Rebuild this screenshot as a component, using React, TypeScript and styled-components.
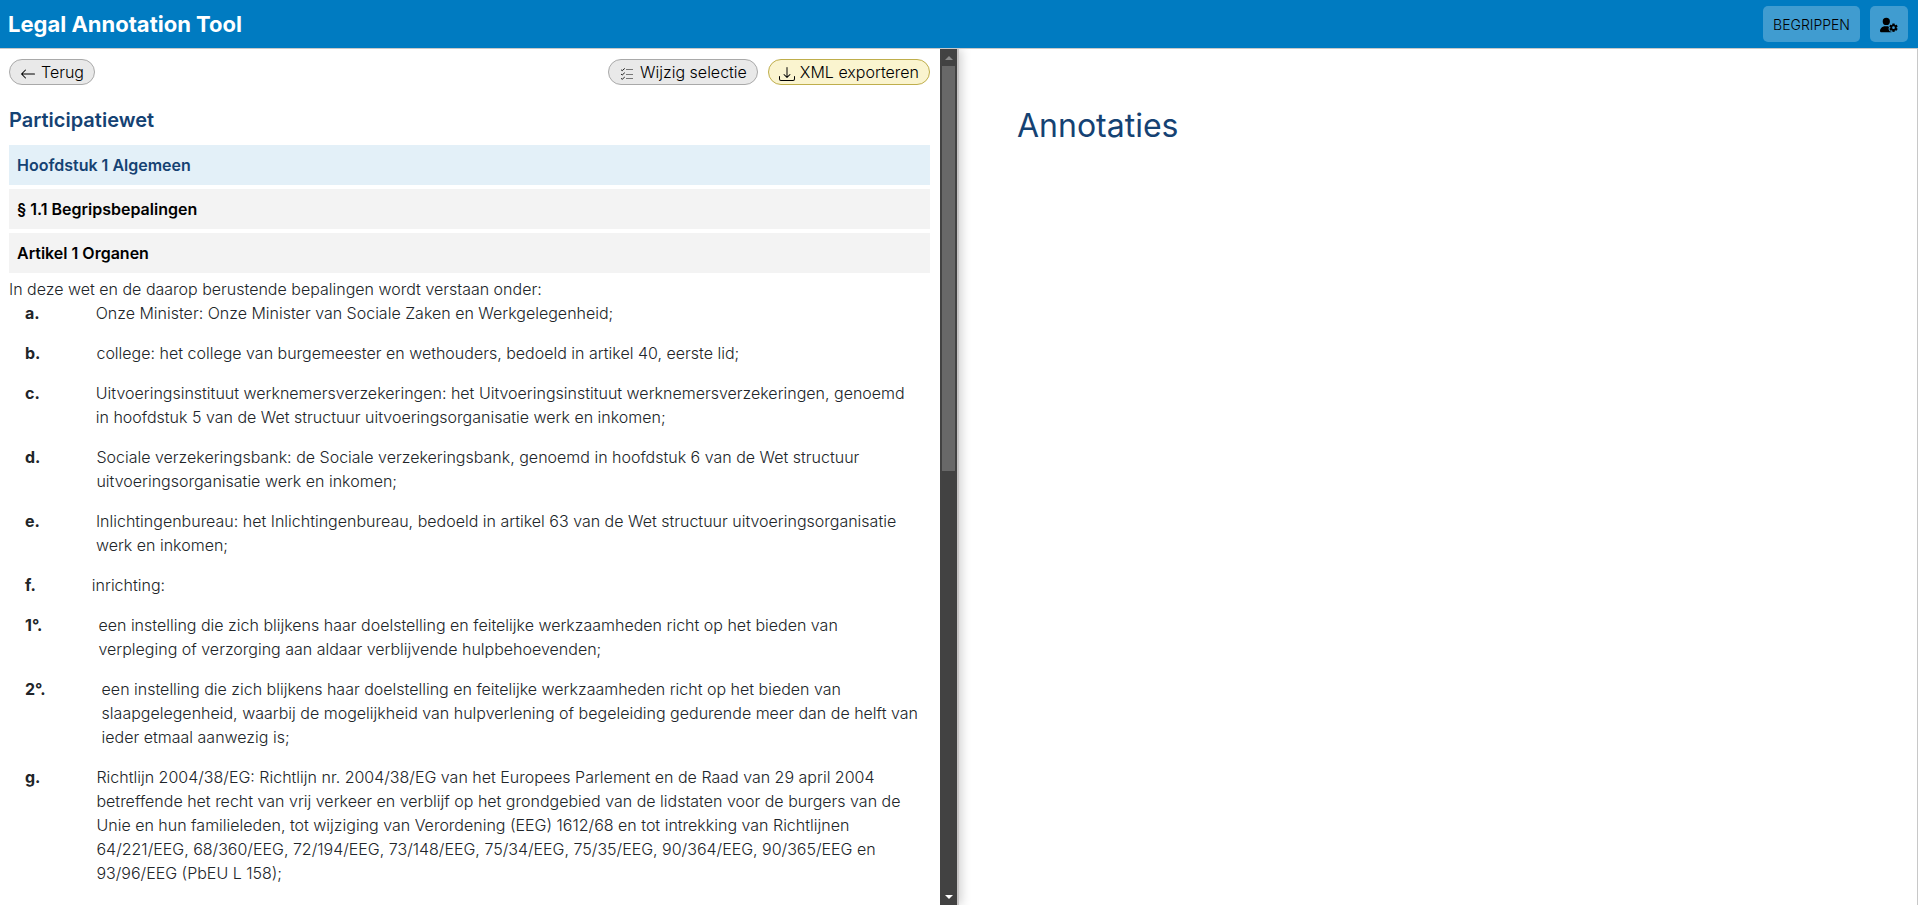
import React from "react";
import styled, { createGlobalStyle } from "styled-components";
import { BsArrowLeft, BsDownload } from "react-icons/bs";
import { FaUserGear } from "react-icons/fa6";

const GlobalStyle = createGlobalStyle`
  *, *::before, *::after { box-sizing: border-box; }
  body {
    margin: 0;
    background: #fff;
    color: #212529;
    font: 300 16px/24px Inter, "Liberation Sans", sans-serif;
  }
  button { font: inherit; cursor: pointer; }
`;

const Page = styled.div`
  display: flex;
  flex-direction: column;
  height: 100vh;
`;

const Header = styled.header`
  display: flex;
  align-items: center;
  justify-content: space-between;
  height: 49px;
  flex: none;
  padding: 0 10px 0 8px;
  background: #007bc1;
  border-bottom: 1px solid #c8c8c8;
`;

const Brand = styled.h1`
  margin: 0;
  color: #fff;
  font-size: 22px;
  font-weight: 700;
`;

const HeaderActions = styled.div`
  display: flex;
  align-items: center;
  gap: 10px;
`;

const HeaderButton = styled.button`
  display: flex;
  align-items: center;
  height: 36px;
  padding: 2px 10px 0;
  border: 0;
  border-radius: 5px;
  background: #409cd0;
  color: #000;
  font-size: 14px;
`;

const Panels = styled.main`
  display: grid;
  grid-template-columns: minmax(0, 1fr) minmax(0, 1fr);
  grid-template-rows: minmax(0, 1fr);
  flex: 1;
  min-height: 0;
  overflow: hidden;
`;

const LawPanel = styled.section`
  display: flex;
  border-right: 2px solid #c6c4c4;
  box-shadow: 2px 0 10px rgba(0, 0, 0, 0.2);
`;

const LawContent = styled.div`
  flex: 1;
  min-width: 0;
  overflow: hidden;
  padding: 10px 10px 0 9px;
`;

const Toolbar = styled.div`
  display: flex;
  gap: 10px;
`;

const Spacer = styled.span`
  flex: 1;
`;

const PillButton = styled.button<{ $tone?: "yellow" }>`
  display: flex;
  align-items: center;
  gap: 5px;
  height: 26px;
  padding: 0 10px;
  border: 1px solid ${(p) => (p.$tone ? "#bfae4c" : "#a9a9a9")};
  border-radius: 13px;
  background: ${(p) => (p.$tone ? "#faf4cf" : "#e9e9e9")};
  color: #000;

  svg { flex: none; margin-top: 3px; }
`;

const LawTitle = styled.h2`
  margin: 23px 0 13px;
  color: #154273;
  font-size: 20px;
  line-height: 24px;
  font-weight: 600;
`;

const SectionBar = styled.h3<{ $chapter?: boolean }>`
  margin: 0 0 4px;
  padding: 8px;
  background: ${(p) => (p.$chapter ? "#e3f0f8" : "#f3f3f3")};
  color: ${(p) => (p.$chapter ? "#154273" : "#000")};
  font-size: 16px;
  line-height: 24px;
  font-weight: 600;
`;

const Paragraph = styled.p`
  margin: 0;
`;

const Clauses = styled.ul`
  display: flex;
  flex-direction: column;
  gap: 16px;
  margin: 0;
  padding: 0 10px 0 16px;
  list-style: none;
`;

const Clause = styled.li`
  display: flex;
  gap: 56px;
`;

const ClauseLabel = styled.strong`
  flex: none;
  font-weight: 700;
`;

const Scrollbar = styled.div`
  display: flex;
  flex-direction: column;
  align-items: center;
  flex: none;
  width: 17px;
  background: #424242;
`;

const Arrow = styled.span<{ $down?: boolean }>`
  display: flex;
  align-items: center;
  justify-content: center;
  height: 17px;

  &::before {
    content: "";
    border: 4px solid transparent;
    border-top-width: ${(p) => (p.$down ? 4 : 0)}px;
    border-bottom-width: ${(p) => (p.$down ? 0 : 4)}px;
    border-top-color: ${(p) => (p.$down ? "#fff" : "transparent")};
    border-bottom-color: ${(p) => (p.$down ? "transparent" : "#8a8a8a")};
  }
`;

const Track = styled.div`
  flex: 1;
  width: 13px;
`;

const Thumb = styled.div`
  height: 49.3%;
  background: #686868;
`;

const NotesPanel = styled.section`
  padding: 57px 58px;
  border-right: 1px solid #c8c8c8;
`;

const NotesTitle = styled.h2`
  margin: 0;
  color: #154273;
  font-size: 32px;
  line-height: 40px;
  font-weight: 400;
`;

function ChecklistIcon() {
  return (
    <svg width="16" height="16" viewBox="0 0 16 16" fill="none" aria-hidden="true">
      <path d="M2 3.7l1.2 1L5.8 2.4M2 8l1.2 1 2.6-2.3M2 12.3l1.2 1L5.8 11" stroke="#222" strokeWidth="1" />
      <path d="M7 3.5h7M7 8.5h7M7 12.5h7" stroke="#777" strokeWidth="1" />
    </svg>
  );
}

const clauses = [
  ["a.", "Onze Minister: Onze Minister van Sociale Zaken en Werkgelegenheid;"],
  ["b.", "college: het college van burgemeester en wethouders, bedoeld in artikel 40, eerste lid;"],
  ["c.", "Uitvoeringsinstituut werknemersverzekeringen: het Uitvoeringsinstituut werknemersverzekeringen, genoemd in hoofdstuk 5 van de Wet structuur uitvoeringsorganisatie werk en inkomen;"],
  ["d.", "Sociale verzekeringsbank: de Sociale verzekeringsbank, genoemd in hoofdstuk 6 van de Wet structuur uitvoeringsorganisatie werk en inkomen;"],
  ["e.", "Inlichtingenbureau: het Inlichtingenbureau, bedoeld in artikel 63 van de Wet structuur uitvoeringsorganisatie werk en inkomen;"],
  ["f.", "inrichting:"],
  ["1°.", "een instelling die zich blijkens haar doelstelling en feitelijke werkzaamheden richt op het bieden van verpleging of verzorging aan aldaar verblijvende hulpbehoevenden;"],
  ["2°.", "een instelling die zich blijkens haar doelstelling en feitelijke werkzaamheden richt op het bieden van slaapgelegenheid, waarbij de mogelijkheid van hulpverlening of begeleiding gedurende meer dan de helft van ieder etmaal aanwezig is;"],
  ["g.", "Richtlijn 2004/38/EG: Richtlijn nr. 2004/38/EG van het Europees Parlement en de Raad van 29 april 2004 betreffende het recht van vrij verkeer en verblijf op het grondgebied van de lidstaten voor de burgers van de Unie en hun familieleden, tot wijziging van Verordening (EEG) 1612/68 en tot intrekking van Richtlijnen 64/221/EEG, 68/360/EEG, 72/194/EEG, 73/148/EEG, 75/34/EEG, 75/35/EEG, 90/364/EEG, 90/365/EEG en 93/96/EEG (PbEU L 158);"],
];

export default function App() {
  return (
    <Page>
      <GlobalStyle />
      <Header>
        <Brand>Legal Annotation Tool</Brand>
        <HeaderActions>
          <HeaderButton type="button">BEGRIPPEN</HeaderButton>
          <HeaderButton type="button" aria-label="Gebruikersinstellingen">
            <FaUserGear size={18} />
          </HeaderButton>
        </HeaderActions>
      </Header>
      <Panels>
        <LawPanel>
          <LawContent>
            <Toolbar>
              <PillButton type="button"><BsArrowLeft size={16} />Terug</PillButton>
              <Spacer />
              <PillButton type="button"><ChecklistIcon />Wijzig selectie</PillButton>
              <PillButton type="button" $tone="yellow"><BsDownload size={16} />XML exporteren</PillButton>
            </Toolbar>
            <LawTitle>Participatiewet</LawTitle>
            <SectionBar $chapter>Hoofdstuk 1 Algemeen</SectionBar>
            <SectionBar>§ 1.1 Begripsbepalingen</SectionBar>
            <SectionBar>Artikel 1 Organen</SectionBar>
            <Paragraph>In deze wet en de daarop berustende bepalingen wordt verstaan onder:</Paragraph>
            <Clauses>
              {clauses.map(([label, text]) => (
                <Clause key={label}>
                  <ClauseLabel>{label}</ClauseLabel>
                  <span>{text}</span>
                </Clause>
              ))}
            </Clauses>
          </LawContent>
          <Scrollbar aria-hidden="true">
            <Arrow />
            <Track><Thumb /></Track>
            <Arrow $down />
          </Scrollbar>
        </LawPanel>
        <NotesPanel>
          <NotesTitle>Annotaties</NotesTitle>
        </NotesPanel>
      </Panels>
    </Page>
  );
}
